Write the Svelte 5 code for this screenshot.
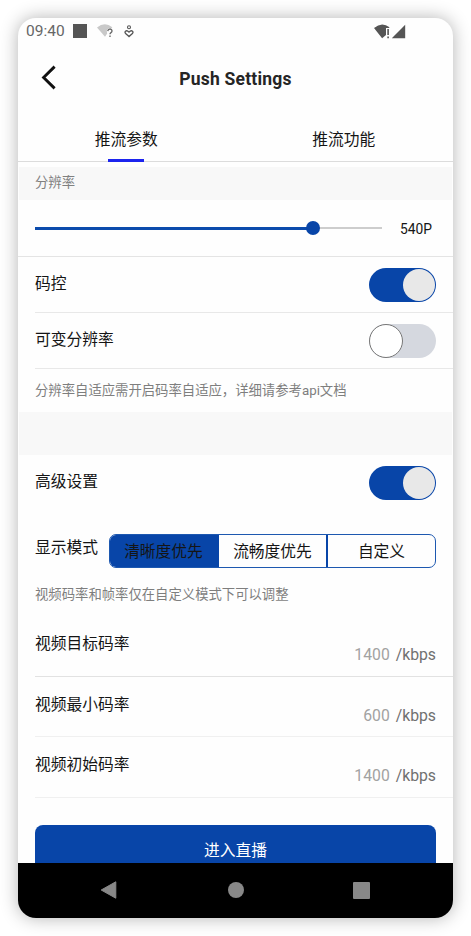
<script lang="ts">
	let resolution = $state(80);
	let bitrateControl = $state(true);
	let variableResolution = $state(false);
	let advanced = $state(true);

	let tab = $state(0);
	let mode = $state(0);

	const tabs = ['推流参数', '推流功能'];
	const modes = ['清晰度优先', '流畅度优先', '自定义'];
	const bitrates = [
		{ label: '视频目标码率', value: 1400 },
		{ label: '视频最小码率', value: 600 },
		{ label: '视频初始码率', value: 1400 }
	];
</script>

{#snippet toggle(on: boolean, change: () => void)}
	<button class="switch" class:on role="switch" aria-checked={on} aria-label="switch" onclick={change}>
		<span class="knob"></span>
	</button>
{/snippet}

<div class="page">
	<div class="phone">
		<div class="status">
			<span class="time">09:40</span>
			<span class="square"></span>
			<svg class="wifi" width="17" height="14" viewBox="0 0 17 14">
				<path d="M0 3.6Q7.6-2.8 15.3 3.2L13.8 5Q10.5 3.7 9.8 6.5L10.2 9.6 8 12.7Z" fill="#c9c9c9" />
				<path
					d="M10.8 7.1Q11 5.1 13 5.1T15 7Q15 8 14 8.6T13 10.3M13 11.5V13"
					fill="none"
					stroke="#666"
					stroke-width="1.3"
				/>
			</svg>
			<svg class="person" width="10" height="13" viewBox="0 0 10 13" fill="none" stroke="#555">
				<circle cx="5" cy="2.3" r="1.5" stroke-width="1.1" />
				<path d="M5 11.6L1.6 8.5Q.5 7.2 1.5 6.2 3 4.9 5 7.1 7 4.9 8.5 6.2 9.5 7.2 8.4 8.5Z" stroke-width="1.3" />
			</svg>
			<svg class="signal" width="32" height="15" viewBox="0 0 32 15" fill="#555">
				<path d="M0 3.9Q8-2.8 15.5 3.3L15 4H12V11L8.1 14.2Z" />
				<path d="M13.3 5H14.9V11H13.3ZM13.3 12.4H14.9V14.2H13.3Z" />
				<path d="M31.2.8V14.2H17.8Z" />
			</svg>
		</div>

		<header>
			<button class="back" aria-label="back">
				<svg width="15" height="25" viewBox="0 0 15 25">
					<path d="M13.6 1.6L2.6 12.5 13.6 23.4" fill="none" stroke="#111" stroke-width="2.9" />
				</svg>
			</button>
			<h1>Push Settings</h1>
		</header>

		<nav class="tabs">
			{#each tabs as name, i}
				<button class:active={tab === i} onclick={() => (tab = i)}>{name}</button>
			{/each}
		</nav>

		<main>
			<div class="section">分辨率</div>
			<div class="slider">
				<div class="track">
					<div class="fill" style="width: {resolution}%"></div>
					<div class="dot"></div>
				</div>
				<span>540P</span>
			</div>
			<div class="row">
				<span>码控</span>
				{@render toggle(bitrateControl, () => (bitrateControl = !bitrateControl))}
			</div>
			<div class="row">
				<span>可变分辨率</span>
				{@render toggle(variableResolution, () => (variableResolution = !variableResolution))}
			</div>
			<p class="hint">分辨率自适应需开启码率自适应，详细请参考api文档</p>
			<div class="gap"></div>
			<div class="row advanced">
				<span>高级设置</span>
				{@render toggle(advanced, () => (advanced = !advanced))}
			</div>
			<div class="mode">
				<span>显示模式</span>
				<div class="segments">
					{#each modes as name, i}
						<button class:selected={mode === i} onclick={() => (mode = i)}>{name}</button>
					{/each}
				</div>
			</div>
			<p class="hint mode-hint">视频码率和帧率仅在自定义模式下可以调整</p>
			{#each bitrates as { label, value }}
				<div class="bitrate">
					<span>{label}</span>
					<div class="value"><span>{value}</span> /kbps</div>
				</div>
			{/each}
			<button class="enter">进入直播</button>
		</main>

		<div class="navbar">
			<svg width="18" height="20" viewBox="0 0 18 20">
				<path d="M15.8 1.8V18.2L1.2 10Z" fill="#888" stroke="#888" stroke-linejoin="round" />
			</svg>
			<span class="home"></span>
			<span class="recent"></span>
		</div>
	</div>
</div>

<style>
	:global(body) {
		margin: 0;
		background: #fff;
	}

	.page {
		box-sizing: border-box;
		width: 471px;
		height: 936px;
		padding: 18px;
		overflow: hidden;
		font-family: Roboto, 'Noto Sans CJK SC', sans-serif;
		font-size: 15.75px;
		line-height: 24px;
		color: #151515;
	}

	.phone {
		display: flex;
		flex-direction: column;
		width: 435px;
		height: 899.5px;
		border-radius: 18px;
		overflow: hidden;
		background: #fefefe;
		box-shadow: 0 0 18px rgba(0, 0, 0, 0.3);
	}

	button {
		padding: 0;
		border: 0;
		background: none;
		font: inherit;
		color: inherit;
		cursor: pointer;
	}

	svg {
		display: block;
	}

	.status {
		display: flex;
		align-items: center;
		height: 26px;
		padding: 0 47px 0 8px;
		flex-shrink: 0;
	}

	.time {
		width: 47px;
		font-size: 15.5px;
		color: #666;
	}

	.square {
		width: 14px;
		height: 14px;
		background: #555;
	}

	.wifi {
		margin-left: 10px;
	}

	.person {
		margin-left: 10px;
	}

	.signal {
		margin-left: auto;
	}

	header {
		display: grid;
		grid-template-columns: 60px 1fr 60px;
		align-items: center;
		height: 68px;
		flex-shrink: 0;
	}

	.back {
		justify-self: start;
		margin: -2px 0 0 23px;
	}

	h1 {
		margin: 1px 0 0;
		text-align: center;
		font-size: 17.5px;
		font-weight: 700;
		letter-spacing: 0.2px;
		color: #252525;
	}

	.tabs {
		display: flex;
		height: 49px;
		flex-shrink: 0;
		border-bottom: 1px solid #dcdcdc;
	}

	.tabs button {
		position: relative;
		flex: 1;
		padding: 7px 1px 0 0;
	}

	.tabs .active::after {
		content: '';
		position: absolute;
		left: 50%;
		bottom: -1px;
		width: 36px;
		height: 3px;
		margin-left: -19px;
		background: #1c24ee;
	}

	main {
		flex: 1;
		min-height: 0;
		padding-top: 5px;
		overflow: hidden;
	}

	.section {
		height: 33px;
		margin: 0 1px;
		padding-left: 16px;
		background: #f8f8f8;
		font-size: 13.35px;
		line-height: 31px;
		color: #808080;
	}

	.slider {
		display: flex;
		align-items: center;
		height: 56px;
		padding: 0 17px;
		border-bottom: 1px solid #e4e4e4;
	}

	.track {
		position: relative;
		display: flex;
		align-items: center;
		width: 347px;
		height: 14px;
		background: linear-gradient(#cdcdcd, #cdcdcd) center / 100% 2px no-repeat;
	}

	.fill {
		height: 3px;
		background: #0b4bac;
	}

	.dot {
		width: 14px;
		height: 14px;
		margin-left: -7px;
		border-radius: 50%;
		background: #0845a8;
	}

	.slider span {
		margin: 1px 0 0 auto;
		padding-right: 4px;
		font-size: 13.8px;
	}

	.row {
		display: flex;
		align-items: center;
		justify-content: space-between;
		height: 55px;
		margin-left: 17px;
		padding-right: 17px;
		border-bottom: 1px solid #e8e8e8;
	}

	.row > span {
		margin-top: -2px;
	}

	.switch {
		display: flex;
		box-sizing: border-box;
		width: 67px;
		height: 34px;
		border-radius: 17px;
		background: #d5d8df;
	}

	.knob {
		box-sizing: border-box;
		width: 34px;
		height: 34px;
		border: 1px solid #777;
		border-radius: 50%;
		background: #fff;
	}

	.switch.on {
		justify-content: flex-end;
		padding: 1px;
		background: #0845a8;
	}

	.on .knob {
		width: 32px;
		height: 32px;
		border: 0;
		background: #e8e8e8;
	}

	.hint {
		height: 43px;
		margin: 0 0 0 17px;
		font-size: 13.35px;
		line-height: 44px;
		color: #7e7e7e;
	}

	.gap {
		height: 43px;
		margin: 0 1px;
		background: #f8f8f8;
	}

	.row.advanced {
		height: 56px;
		border: 0;
	}

	.mode {
		display: flex;
		align-items: center;
		justify-content: space-between;
		height: 80px;
		padding: 0 17px;
	}

	.mode > span {
		margin-top: -6px;
	}

	.segments {
		display: flex;
		box-sizing: border-box;
		width: 327px;
		height: 34px;
		border: 1px solid #1d58b0;
		border-radius: 7px;
		overflow: hidden;
	}

	.segments button {
		flex: 1;
		padding-top: 2px;
	}

	.segments button + button {
		border-left: 2px solid #0845a8;
	}

	.segments .selected {
		background: #0845a8;
	}

	.mode-hint {
		height: 25px;
		line-height: 8px;
	}

	.bitrate {
		display: flex;
		justify-content: space-between;
		height: 59.3px;
		margin-left: 17px;
		padding-right: 17px;
		border-bottom: 1px solid #f0f0f0;
	}

	.mode-hint + .bitrate {
		height: 60px;
		border-color: #e2e2e2;
	}

	.bitrate > span {
		padding-top: 16px;
	}

	.value {
		padding-top: 27px;
		color: #707070;
	}

	.value span {
		margin-right: 2px;
		color: #a2a2a2;
	}

	.enter {
		display: block;
		width: 401px;
		height: 52px;
		margin: 27.4px 17px 0;
		border-radius: 8px;
		background: #0845a8;
		color: #fff;
	}

	.navbar {
		display: flex;
		align-items: center;
		justify-content: space-between;
		height: 54.5px;
		padding: 0 83px 0 82px;
		flex-shrink: 0;
		background: #000;
	}

	.home {
		width: 16px;
		height: 16px;
		border-radius: 50%;
		background: #888;
	}

	.recent {
		width: 17px;
		height: 17px;
		border-radius: 1px;
		background: #888;
	}
</style>
